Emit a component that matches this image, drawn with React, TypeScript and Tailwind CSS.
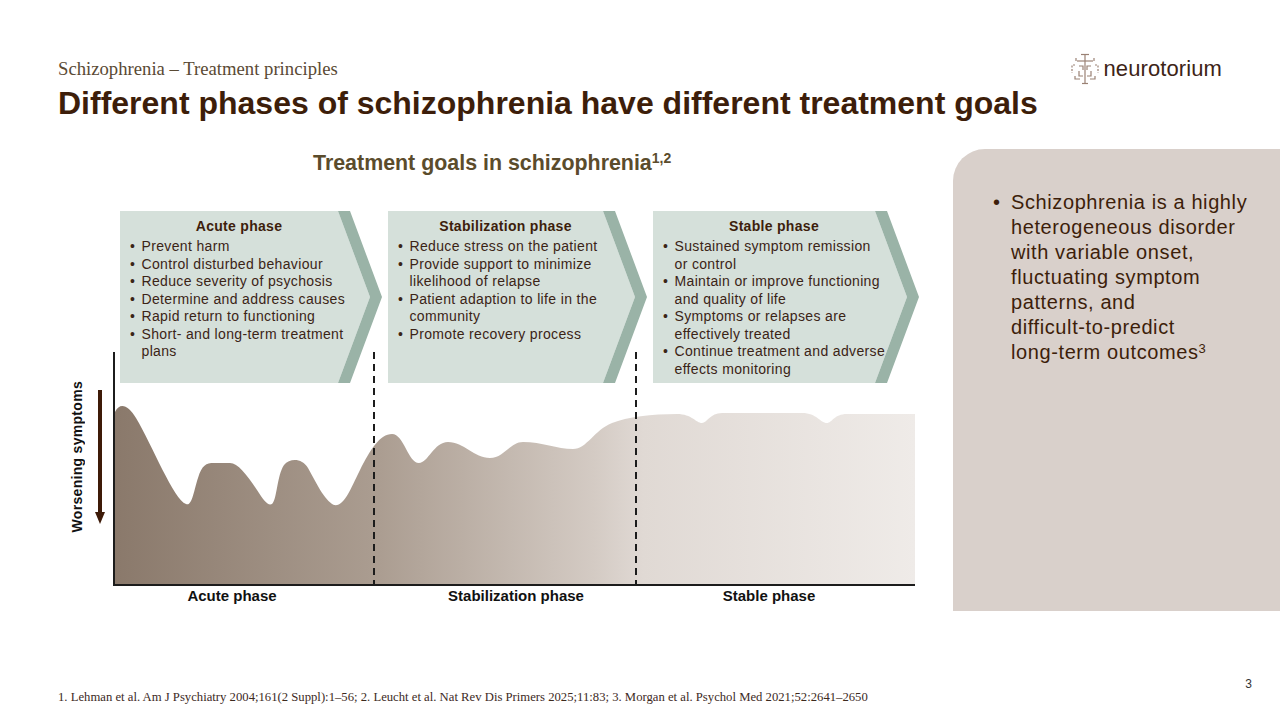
import React from "react";

const sans = "font-['Liberation_Sans',Arial,sans-serif]";
const serif = "font-['Liberation_Serif','Times_New_Roman',serif]";

function Logo() {
  return (
    <div className="flex items-center gap-[5px] -mt-[7px]">
      <svg width="28" height="33" viewBox="0 0 28 33" fill="none" stroke="#9a8174" strokeWidth="1.2">
        <path d="M14 2 V32" />
        <path d="M10 2.5 H18" />
        <path d="M6 9 H22" />
        <path d="M5 6 V9" />
        <path d="M23 6 V9" />
        <path d="M4 13 H1 V21" strokeDasharray="2 1.5" />
        <path d="M24 13 H27 V21" strokeDasharray="2 1.5" />
        <path d="M8 14 H12 V18" />
        <path d="M20 14 H16 V18" />
        <path d="M4 24 V27 H9" />
        <path d="M24 24 V27 H19" />
        <path d="M8 19 V24 H12" />
        <path d="M20 19 V24 H16" />
        <path d="M11 31.5 H17" />
      </svg>
      <span className={`${sans} text-[22px] leading-[26px] text-[#3d2416] tracking-[0.1px]`}>neurotorium</span>
    </div>
  );
}

type CardProps = {
  width: number;
  light: number;
  title: string;
  items: string[][];
};

function Chevron({ width, light, title, items }: CardProps) {
  const s = light + 12;
  const t = width;
  const lightPts = `0,0 ${light},0 ${light + 32},86 ${light},172 0,172`;
  const stripePts = `${light},0 ${s},0 ${t},86 ${s},172 ${light},172 ${light + 32},86`;
  return (
    <div className="relative h-[172px] shrink-0" style={{ width }}>
      <svg className="absolute inset-0" width={width} height={172} viewBox={`0 0 ${width} 172`}>
        <polygon points={lightPts} fill="#d5e0da" />
        <polygon points={stripePts} fill="#9ab3a7" />
      </svg>
      <div className={`relative ${sans} pt-[5px]`}>
        <div
          className="text-[14px] leading-[20px] font-bold text-[#3d1e0c] text-center tracking-[0.3px]"
          style={{ width: light + 20 }}
        >
          {title}
        </div>
        <ul className="mt-[2px] pl-[10px] text-[14px] leading-[17.5px] text-[#3b2416] tracking-[0.35px]">
          {items.map((lines, i) => (
            <li key={i} className="flex">
              <span className="w-[11.5px] shrink-0">•</span>
              <span className="whitespace-nowrap">
                {lines.map((l, j) => (
                  <React.Fragment key={j}>
                    {j > 0 && <br />}
                    {l}
                  </React.Fragment>
                ))}
              </span>
            </li>
          ))}
        </ul>
      </div>
    </div>
  );
}

function Chart() {
  const d =
    "M3,235 L3,62 C8,52 16,55 24,68 C40,95 62,150 74,154 C80,157 82,140 86,128 C90,115 94,113 102,113 L118,113 C126,113 135,125 145,140 C152,151 156,156 160,154 C165,150 165,125 172,115 C178,108 190,108 196,118 C204,132 212,150 222,155 C232,157 238,140 248,120 C258,100 268,84 280,84 C292,84 296,113 307,113 C316,113 322,92 336,92 C352,92 362,108 378,108 C392,108 398,92 411,92 C430,92 445,99 461,99 C475,99 482,80 500,73 C515,67 540,64 565,64 C580,64 584,73 590,73 C595,73 598,63 610,63 L690,63 C705,63 708,73 715,73 C720,73 722,64 735,64 L803,64 L803,235 Z";
  return (
    <svg width="808" height="240" viewBox="0 0 808 240" className="shrink-0 block">
      <defs>
        <linearGradient id="g" x1="3" y1="0" x2="803" y2="0" gradientUnits="userSpaceOnUse">
          <stop offset="0" stopColor="#8a796b" />
          <stop offset="0.33" stopColor="#ab9d91" />
          <stop offset="0.6" stopColor="#d4cbc4" />
          <stop offset="0.66" stopColor="#e0d9d4" />
          <stop offset="1" stopColor="#efebe8" />
        </linearGradient>
      </defs>
      <path d={d} fill="url(#g)" />
      <line x1="2" y1="2" x2="2" y2="236" stroke="#1c1c1c" strokeWidth="2" />
      <line x1="1" y1="235" x2="803" y2="235" stroke="#1c1c1c" strokeWidth="2" />
      <line x1="262" y1="2" x2="262" y2="234" stroke="#1c1c1c" strokeWidth="2" strokeDasharray="7 5" />
      <line x1="524" y1="2" x2="524" y2="234" stroke="#1c1c1c" strokeWidth="2" strokeDasharray="7 5" />
    </svg>
  );
}

export default function App() {
  return (
    <div className={`w-[1280px] h-[720px] bg-white flex flex-col overflow-hidden ${sans}`}>
      <header className="flex justify-between items-start pl-[58px] pr-[58px] pt-[59px]">
        <div>
          <div className={`${serif} text-[18.7px] leading-[20px] text-[#5a4a34]`}>
            Schizophrenia – Treatment principles
          </div>
          <h1 className="mt-[6px] text-[32px] leading-[36px] font-bold text-[#3d1e0a] whitespace-nowrap">
            Different phases of schizophrenia have different treatment goals
          </h1>
        </div>
        <Logo />
      </header>

      <main className="flex mt-[28px]">
        <div className="w-[953px] pl-[58px] shrink-0">
          <div className="pl-[255px] pt-[2px] text-[21.4px] leading-[24px] font-bold text-[#5b4c2c] whitespace-nowrap">
            Treatment goals in schizophrenia
            <sup className="text-[14px]">1,2</sup>
          </div>
          <div className="flex gap-[6px] ml-[62px] mt-[36px]">
            <Chevron
              width={262}
              light={218}
              title="Acute phase"
              items={[
                ["Prevent harm"],
                ["Control disturbed behaviour"],
                ["Reduce severity of psychosis"],
                ["Determine and address causes"],
                ["Rapid return to functioning"],
                ["Short- and long-term treatment", "plans"],
              ]}
            />
            <Chevron
              width={259}
              light={215}
              title="Stabilization phase"
              items={[
                ["Reduce stress on the patient"],
                ["Provide support to minimize", "likelihood of relapse"],
                ["Patient adaption to life in the", "community"],
                ["Promote recovery process"],
              ]}
            />
            <Chevron
              width={266}
              light={222}
              title="Stable phase"
              items={[
                ["Sustained symptom remission", "or control"],
                ["Maintain or improve functioning", "and quality of life"],
                ["Symptoms or relapses are", "effectively treated"],
                ["Continue treatment and adverse", "effects monitoring"],
              ]}
            />
          </div>
          <div className="flex items-start -mt-[33px]">
            <div className="ml-[11px] mt-[33px] h-[147px] w-[16px] flex items-center justify-center">
              <span className="[writing-mode:vertical-rl] rotate-180 text-[14px] leading-[16px] font-bold text-[#111] whitespace-nowrap tracking-[0.3px]">
                Worsening symptoms
              </span>
            </div>
            <svg width="12" height="135" viewBox="0 0 12 135" className="ml-[9px] mt-[40px] shrink-0">
              <line x1="6" y1="0" x2="6" y2="124" stroke="#3d1a08" strokeWidth="4" />
              <polygon points="1,122 11,122 6,134" fill="#3d1a08" />
            </svg>
            <div className="ml-[6px]">
              <Chart />
            </div>
          </div>
          <div className="flex ml-[56px] -mt-[2px] text-[15px] leading-[16px] font-bold text-[#111]">
            <div className="w-[236px] text-center">Acute phase</div>
            <div className="w-[332px] text-center">Stabilization phase</div>
            <div className="w-[174px] text-center">Stable phase</div>
          </div>
        </div>
        <aside className="w-[327px] h-[462px] bg-[#d9d0cb] rounded-tl-[32px] pl-[40px] pt-[41px] shrink-0">
          <div className="flex text-[20px] leading-[25px] text-[#3d1e0a]">
            <span className="w-[18px] shrink-0">•</span>
            <span className="whitespace-nowrap tracking-[0.6px]">
              Schizophrenia is a highly
              <br />
              heterogeneous disorder
              <br />
              with variable onset,
              <br />
              fluctuating symptom
              <br />
              patterns, and
              <br />
              difficult-to-predict
              <br />
              long-term outcomes
              <sup className="text-[13px] tracking-normal">3</sup>
            </span>
          </div>
        </aside>
      </main>

      <footer className="mt-[66px]">
        <div className="flex justify-end pr-[28px] text-[12px] leading-[14px] text-[#333]">3</div>
        <div className={`${serif} -mt-[2px] pl-[58px] text-[12.7px] leading-[16px] text-[#3d2a1e] whitespace-nowrap`}>
          1. Lehman et al. Am J Psychiatry 2004;161(2 Suppl):1–56; 2. Leucht et al. Nat Rev Dis Primers 2025;11:83; 3. Morgan et al. Psychol Med 2021;52:2641–2650
        </div>
      </footer>
    </div>
  );
}
